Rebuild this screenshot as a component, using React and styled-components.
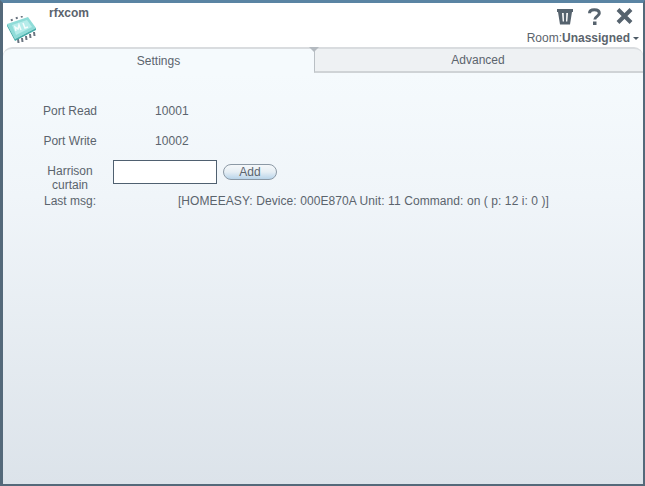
import React from 'react'
import styled, { createGlobalStyle } from 'styled-components'

const GlobalStyle = createGlobalStyle`
  html, body {
    margin: 0;
    padding: 0;
    background: #5a6b78;
  }
  * {
    box-sizing: border-box;
  }
`

const Window = styled.div`
  width: 645px;
  height: 486px;
  display: flex;
  flex-direction: column;
  border-style: solid;
  border-color: #5a84a3 #54697a #54697a #54697a;
  border-width: 3px 2px 2px 3px;
  font-family: 'Liberation Sans', Arial, sans-serif;
  font-size: 12px;
  color: #5b646d;
  overflow: hidden;
`

const Header = styled.div`
  height: 44px;
  flex: none;
  display: flex;
  justify-content: space-between;
  background: #fff;
`

const Brand = styled.div`
  display: flex;
  align-items: flex-start;
  padding: 3px 0 0 4px;
`

const LogoSlot = styled.div`
  margin-top: 10px;
  width: 30px;
  height: 28px;
`

const Title = styled.div`
  margin-left: 12px;
  font-weight: bold;
`

const Tools = styled.div`
  display: flex;
  flex-direction: column;
  align-items: flex-end;
  padding: 5px 4px 0 0;
`

const Icons = styled.div`
  display: flex;
  gap: 15px;
  align-items: flex-start;
  height: 17px;
  margin-right: 6px;
`

const Room = styled.div`
  margin-top: 6px;
  display: flex;
  align-items: center;
  white-space: nowrap;
`

const Caret = styled.span`
  width: 0;
  height: 0;
  margin-left: 3px;
  border-style: solid;
  border-width: 3px 3px 0 3px;
  border-color: #4d5a65 transparent transparent transparent;
`

const Tabs = styled.div`
  position: relative;
  height: 26px;
  flex: none;
  display: flex;
  background: #fff;
`

const Tab = styled.div`
  display: flex;
  align-items: center;
  justify-content: center;
  width: ${p => p.$width}px;
  border-top: 2px solid #d9dcdf;
  border-radius: ${p => p.$radius};
  background: ${p => (p.$active ? '#f5fafd' : '#eef1f3')};
  ${p => !p.$active && 'padding-right: 2px; border-left: 1px solid #b9bfc4; border-bottom: 2px solid #cfd3d6;'}
`

const Notch = styled.span`
  position: absolute;
  left: 306px;
  top: 0;
  width: 0;
  height: 0;
  border-style: solid;
  border-width: 5px 5px 0 5px;
  border-color: #b4bac0 transparent transparent transparent;
`

const Content = styled.div`
  flex: 1;
  padding-top: 23px;
  background: linear-gradient(to bottom, #f5fafd 0%, #f0f5f9 30%, #dce3ea 100%);
`

const Row = styled.div`
  display: grid;
  grid-template-columns: 110px ${p => p.$value}px;
  align-items: ${p => p.$align || 'center'};
  height: ${p => p.$height}px;
`

const Label = styled.div`
  width: 56px;
  margin-left: 39px;
  padding-top: ${p => p.$top || 0}px;
  text-align: center;
  line-height: 14px;
  white-space: nowrap;
`

const Value = styled.div`
  text-align: center;
  white-space: nowrap;
  letter-spacing: 0.08px;
`

const Field = styled.div`
  display: flex;
  align-items: center;
  gap: 6px;
  padding-top: 4px;
`

const Input = styled.input`
  width: 104px;
  height: 24px;
  border: 1px solid #4f6070;
  background: #fff;
  outline: none;
`

const AddButton = styled.button`
  width: 54px;
  height: 16px;
  padding: 0 0 2px;
  border: 1px solid #8c99a5;
  border-radius: 8px;
  background: linear-gradient(to bottom, #f5f8fa 0%, #e6eef4 50%, #b8d4ea 100%);
  font-family: inherit;
  font-size: 12px;
  color: #5b646d;
`

const ChipIcon = () => (
  <svg width="30" height="28" viewBox="0 0 30 28">
    <path
      fill="none"
      stroke="#6a7480"
      strokeWidth="2"
      d="M11 23l.5 4M15 22l.5 4M19 20l.5 4M23 18l.5 4M27 16l.5 4M5 5l-.5-2M10 3l-.5-2M15 1.500l-.5-1.500"
    />
    <path d="M0 8 L21 1 L29 12 L8 23 Z" fill="#8fdcd8" />
    <path d="M0 8 L8 23 L29 12 L29 14 L8 25 L0 10 Z" fill="#48aeab" />
    <path d="M5 9 L20 4 L25 11 L9 19 Z" fill="#b6ecea" />
    <path d="M9 15l-1-4 3 2 1-4 2 5M16 7l2 5 3-1" fill="none" stroke="#f4fcfc" strokeWidth="1.500" />
  </svg>
)

const TrashIcon = () => (
  <svg width="16" height="17" viewBox="0 0 16 17">
    <path
      fillRule="evenodd"
      fill="#56636e"
      d="M0 1h16v3h-1l-2 12.500H3L1 4H0zM5 5l.7 8.500h1.300L6.700 5zM9.300 5L9 13.500h1.300L11 5z"
    />
  </svg>
)

const HelpIcon = () => (
  <svg width="13" height="17" viewBox="0 0 13 17">
    <path
      fill="none"
      stroke="#56636e"
      strokeWidth="3"
      d="M1.500 5.200C1.500 3 3.500 1.700 6.300 1.700s5 1.300 5 3.600c0 3-4.500 3.200-4.500 6.300"
    />
    <rect x="5" y="13.500" width="3.500" height="3.500" fill="#56636e" />
  </svg>
)

const CloseIcon = () => (
  <svg width="17" height="16" viewBox="0 0 17 16">
    <path stroke="#56636e" strokeWidth="4" d="M2 1.500l13 13M15 1.500l-13 13" />
  </svg>
)

const App = () => {
  return (
    <>
      <GlobalStyle />
      <Window>
        <Header>
          <Brand>
            <LogoSlot>
              <ChipIcon />
            </LogoSlot>
            <Title>rfxcom</Title>
          </Brand>
          <Tools>
            <Icons>
              <TrashIcon />
              <HelpIcon />
              <CloseIcon />
            </Icons>
            <Room>
              Room:<b>Unassigned</b>
              <Caret />
            </Room>
          </Tools>
        </Header>
        <Tabs>
          <Tab $active $width={311} $radius="9px 0 0 0">Settings</Tab>
          <Tab $width={329} $radius="0 9px 0 0">Advanced</Tab>
          <Notch />
        </Tabs>
        <Content>
          <Row $value={118} $height={30}>
            <Label>Port Read</Label>
            <Value>10001</Value>
          </Row>
          <Row $value={118} $height={30}>
            <Label>Port Write</Label>
            <Value>10002</Value>
          </Row>
          <Row $value={200} $height={36} $align="start">
            <Label $top={8}>Harrison<br />curtain</Label>
            <Field>
              <Input />
              <AddButton>Add</AddButton>
            </Field>
          </Row>
          <Row $value={501} $height={18}>
            <Label>Last msg:</Label>
            <Value>[HOMEEASY: Device: 000E870A Unit: 11 Command: on ( p: 12 i: 0 )]</Value>
          </Row>
        </Content>
      </Window>
    </>
  )
}

export default App
